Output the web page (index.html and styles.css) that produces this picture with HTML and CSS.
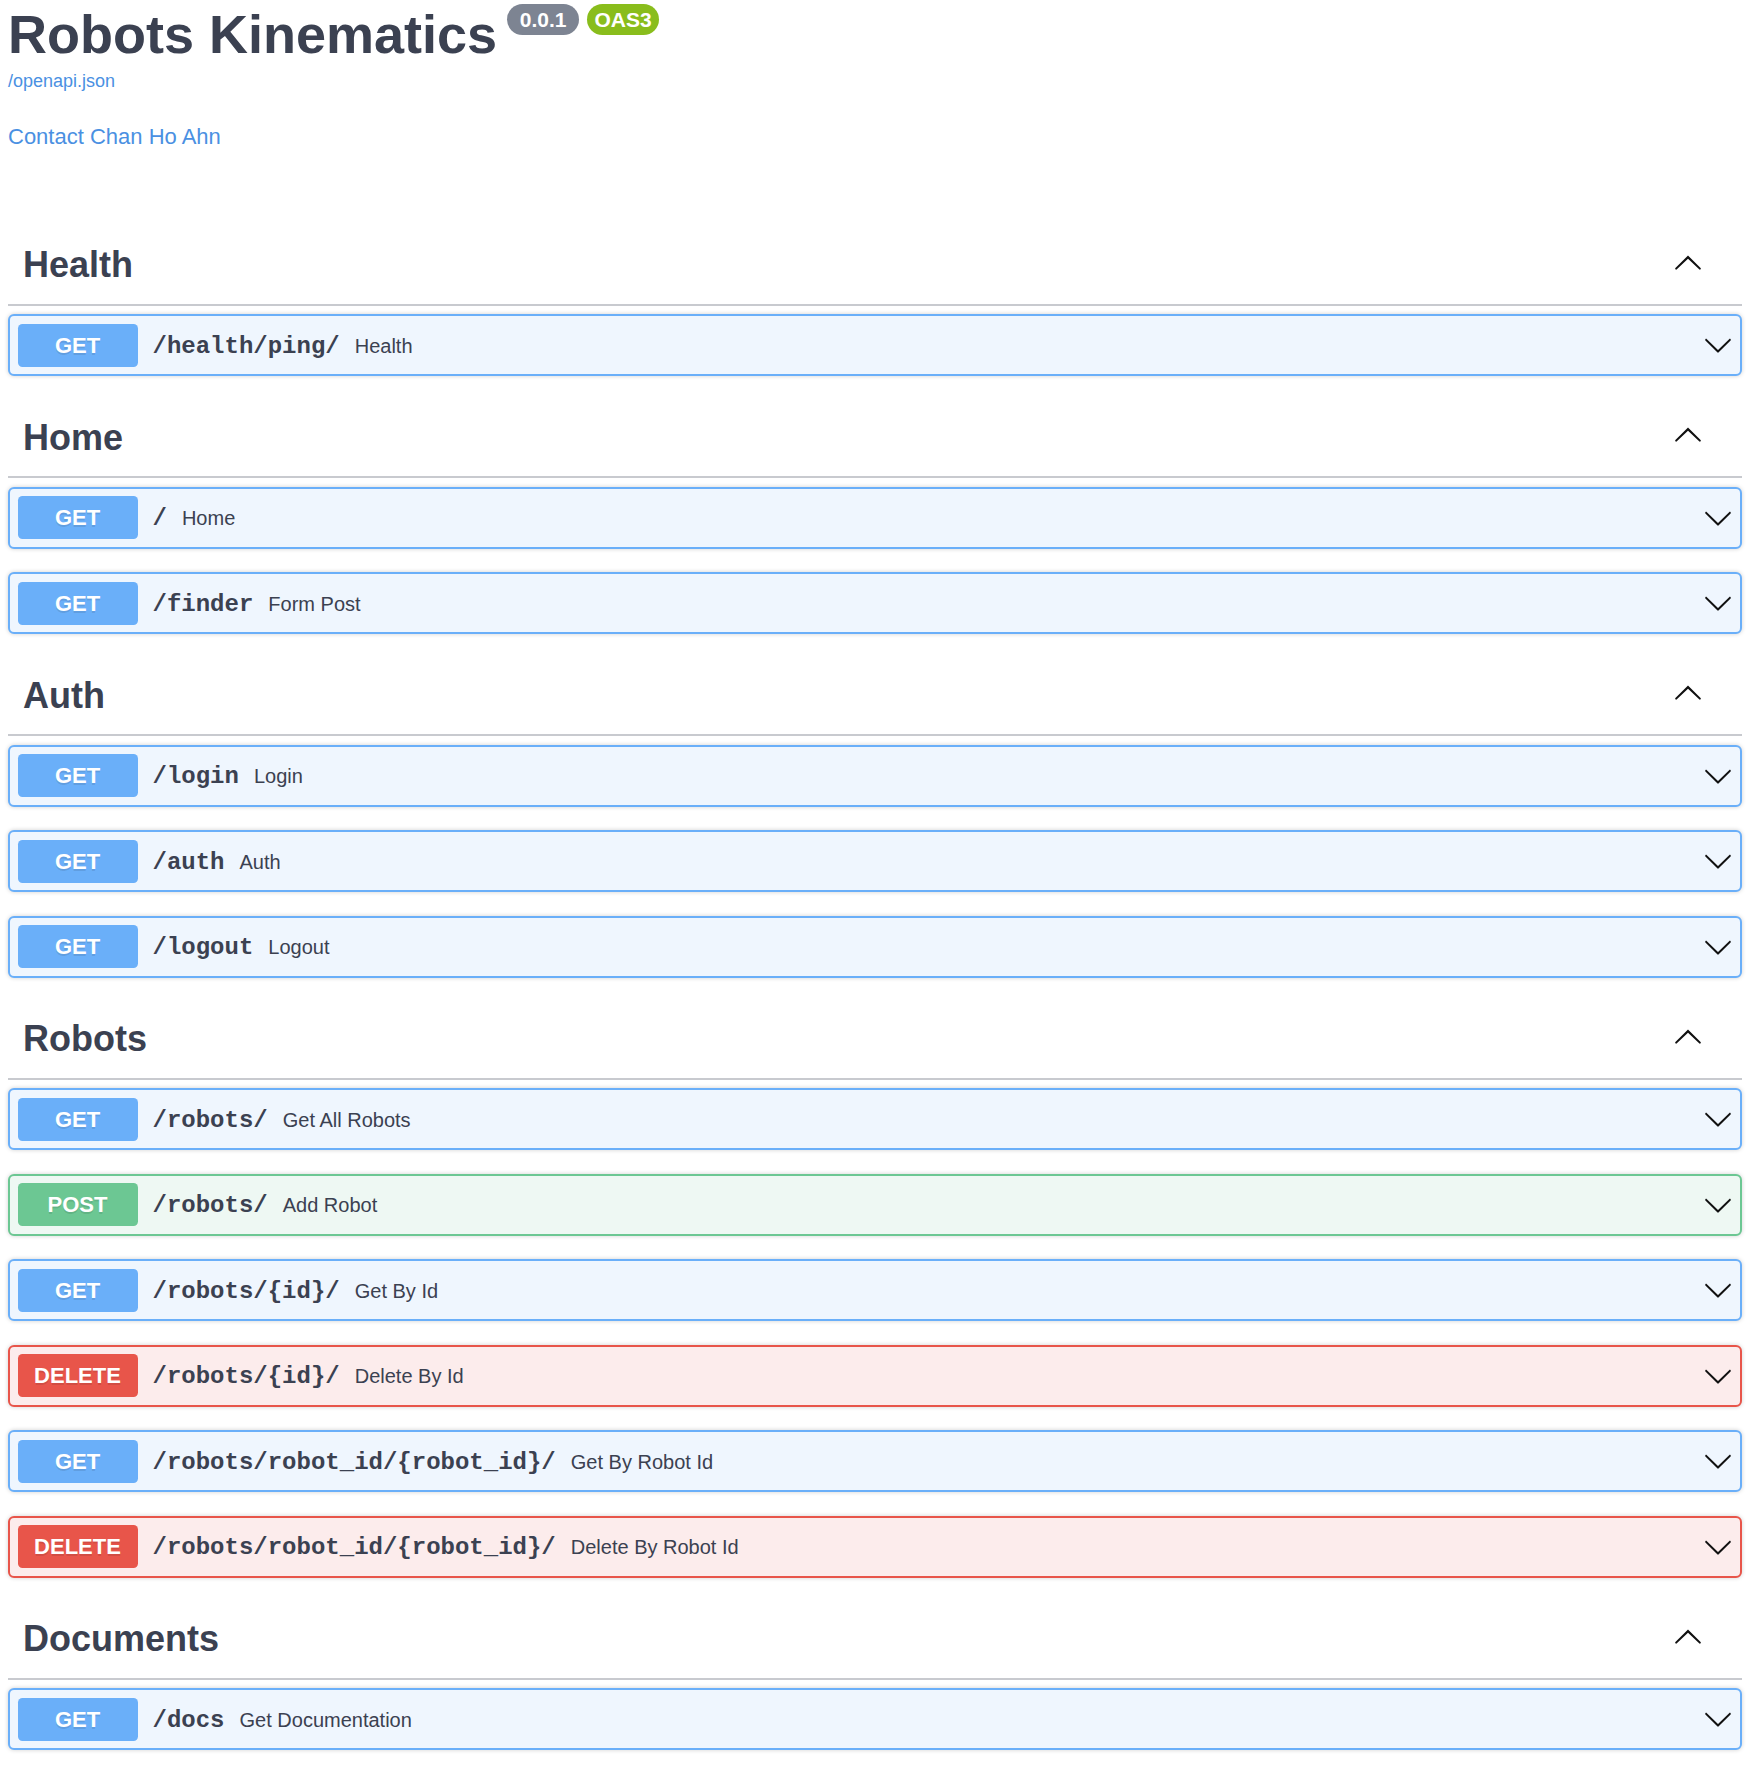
FILE: index.html
```html
<!DOCTYPE html>
<html lang="en">
<head>
<meta charset="utf-8">
<title>Robots Kinematics - Swagger UI</title>
<link rel="stylesheet" href="styles.css">
</head>
<body>
<div class="page">
  <div class="info">
    <div class="title-row">
      <h2 class="title">Robots Kinematics</h2>
      <span class="badge badge-version">0.0.1</span>
      <span class="badge badge-oas">OAS3</span>
    </div>
    <a class="url" href="#">/openapi.json</a>
    <a class="contact" href="#">Contact Chan Ho Ahn</a>
  </div>

  <section class="tag-section">
    <h3 class="tag"><span class="tag-name">Health</span><button class="expand"><svg viewBox="0 0 20 20" class="arrow"><path d="M17.418 14.908C17.69 15.176 18.127 15.176 18.397 14.908C18.667 14.64 18.668 14.207 18.397 13.939L10.489 6.109C10.219 5.841 9.782 5.841 9.51 6.109L1.602 13.939C1.332 14.207 1.332 14.64 1.602 14.908C1.873 15.176 2.311 15.176 2.581 14.908L10 7.767L17.418 14.908Z"/></svg></button></h3>
    <div class="op op-get"><div class="op-summary"><span class="method">GET</span><span class="path">/health/ping/</span><span class="desc">Health</span><svg viewBox="0 0 20 20" class="arrow"><path d="M17.418 6.109c.272-.268.709-.268.979 0s.271.701 0 .969l-7.908 7.83c-.27.268-.707.268-.979 0l-7.908-7.83c-.27-.268-.27-.701 0-.969.271-.268.709-.268.979 0L10 13.25l7.418-7.141z"/></svg></div></div>
  </section>

  <section class="tag-section">
    <h3 class="tag"><span class="tag-name">Home</span><button class="expand"><svg viewBox="0 0 20 20" class="arrow"><path d="M17.418 14.908C17.69 15.176 18.127 15.176 18.397 14.908C18.667 14.64 18.668 14.207 18.397 13.939L10.489 6.109C10.219 5.841 9.782 5.841 9.51 6.109L1.602 13.939C1.332 14.207 1.332 14.64 1.602 14.908C1.873 15.176 2.311 15.176 2.581 14.908L10 7.767L17.418 14.908Z"/></svg></button></h3>
    <div class="op op-get"><div class="op-summary"><span class="method">GET</span><span class="path">/</span><span class="desc">Home</span><svg viewBox="0 0 20 20" class="arrow"><path d="M17.418 6.109c.272-.268.709-.268.979 0s.271.701 0 .969l-7.908 7.83c-.27.268-.707.268-.979 0l-7.908-7.830c-.27-.268-.27-.701 0-.969.271-.268.709-.268.979 0L10 13.25l7.418-7.141z"/></svg></div></div>
    <div class="op op-get"><div class="op-summary"><span class="method">GET</span><span class="path">/finder</span><span class="desc">Form Post</span><svg viewBox="0 0 20 20" class="arrow"><path d="M17.418 6.109c.272-.268.709-.268.979 0s.271.701 0 .969l-7.908 7.83c-.27.268-.707.268-.979 0l-7.908-7.83c-.27-.268-.27-.701 0-.969.271-.268.709-.268.979 0L10 13.25l7.418-7.141z"/></svg></div></div>
  </section>

  <section class="tag-section">
    <h3 class="tag"><span class="tag-name">Auth</span><button class="expand"><svg viewBox="0 0 20 20" class="arrow"><path d="M17.418 14.908C17.69 15.176 18.127 15.176 18.397 14.908C18.667 14.64 18.668 14.207 18.397 13.939L10.489 6.109C10.219 5.841 9.782 5.841 9.51 6.109L1.602 13.939C1.332 14.207 1.332 14.64 1.602 14.908C1.873 15.176 2.311 15.176 2.581 14.908L10 7.767L17.418 14.908Z"/></svg></button></h3>
    <div class="op op-get"><div class="op-summary"><span class="method">GET</span><span class="path">/login</span><span class="desc">Login</span><svg viewBox="0 0 20 20" class="arrow"><path d="M17.418 6.109c.272-.268.709-.268.979 0s.271.701 0 .969l-7.908 7.83c-.27.268-.707.268-.979 0l-7.908-7.83c-.27-.268-.27-.701 0-.969.271-.268.709-.268.979 0L10 13.25l7.418-7.141z"/></svg></div></div>
    <div class="op op-get"><div class="op-summary"><span class="method">GET</span><span class="path">/auth</span><span class="desc">Auth</span><svg viewBox="0 0 20 20" class="arrow"><path d="M17.418 6.109c.272-.268.709-.268.979 0s.271.701 0 .969l-7.908 7.83c-.27.268-.707.268-.979 0l-7.908-7.83c-.27-.268-.27-.701 0-.969.271-.268.709-.268.979 0L10 13.25l7.418-7.141z"/></svg></div></div>
    <div class="op op-get"><div class="op-summary"><span class="method">GET</span><span class="path">/logout</span><span class="desc">Logout</span><svg viewBox="0 0 20 20" class="arrow"><path d="M17.418 6.109c.272-.268.709-.268.979 0s.271.701 0 .969l-7.908 7.83c-.27.268-.707.268-.979 0l-7.908-7.83c-.27-.268-.27-.701 0-.969.271-.268.709-.268.979 0L10 13.25l7.418-7.141z"/></svg></div></div>
  </section>

  <section class="tag-section">
    <h3 class="tag"><span class="tag-name">Robots</span><button class="expand"><svg viewBox="0 0 20 20" class="arrow"><path d="M17.418 14.908C17.69 15.176 18.127 15.176 18.397 14.908C18.667 14.64 18.668 14.207 18.397 13.939L10.489 6.109C10.219 5.841 9.782 5.841 9.51 6.109L1.602 13.939C1.332 14.207 1.332 14.64 1.602 14.908C1.873 15.176 2.311 15.176 2.581 14.908L10 7.767L17.418 14.908Z"/></svg></button></h3>
    <div class="op op-get"><div class="op-summary"><span class="method">GET</span><span class="path">/robots/</span><span class="desc">Get All Robots</span><svg viewBox="0 0 20 20" class="arrow"><path d="M17.418 6.109c.272-.268.709-.268.979 0s.271.701 0 .969l-7.908 7.83c-.27.268-.707.268-.979 0l-7.908-7.83c-.27-.268-.27-.701 0-.969.271-.268.709-.268.979 0L10 13.25l7.418-7.141z"/></svg></div></div>
    <div class="op op-post"><div class="op-summary"><span class="method">POST</span><span class="path">/robots/</span><span class="desc">Add Robot</span><svg viewBox="0 0 20 20" class="arrow"><path d="M17.418 6.109c.272-.268.709-.268.979 0s.271.701 0 .969l-7.908 7.83c-.27.268-.707.268-.979 0l-7.908-7.83c-.27-.268-.27-.701 0-.969.271-.268.709-.268.979 0L10 13.25l7.418-7.141z"/></svg></div></div>
    <div class="op op-get"><div class="op-summary"><span class="method">GET</span><span class="path">/robots/{id}/</span><span class="desc">Get By Id</span><svg viewBox="0 0 20 20" class="arrow"><path d="M17.418 6.109c.272-.268.709-.268.979 0s.271.701 0 .969l-7.908 7.83c-.27.268-.707.268-.979 0l-7.908-7.83c-.27-.268-.27-.701 0-.969.271-.268.709-.268.979 0L10 13.25l7.418-7.141z"/></svg></div></div>
    <div class="op op-delete"><div class="op-summary"><span class="method">DELETE</span><span class="path">/robots/{id}/</span><span class="desc">Delete By Id</span><svg viewBox="0 0 20 20" class="arrow"><path d="M17.418 6.109c.272-.268.709-.268.979 0s.271.701 0 .969l-7.908 7.83c-.27.268-.707.268-.979 0l-7.908-7.83c-.27-.268-.27-.701 0-.969.271-.268.709-.268.979 0L10 13.25l7.418-7.141z"/></svg></div></div>
    <div class="op op-get"><div class="op-summary"><span class="method">GET</span><span class="path">/robots/robot_id/{robot_id}/</span><span class="desc">Get By Robot Id</span><svg viewBox="0 0 20 20" class="arrow"><path d="M17.418 6.109c.272-.268.709-.268.979 0s.271.701 0 .969l-7.908 7.83c-.27.268-.707.268-.979 0l-7.908-7.83c-.27-.268-.27-.701 0-.969.271-.268.709-.268.979 0L10 13.25l7.418-7.141z"/></svg></div></div>
    <div class="op op-delete"><div class="op-summary"><span class="method">DELETE</span><span class="path">/robots/robot_id/{robot_id}/</span><span class="desc">Delete By Robot Id</span><svg viewBox="0 0 20 20" class="arrow"><path d="M17.418 6.109c.272-.268.709-.268.979 0s.271.701 0 .969l-7.908 7.83c-.27.268-.707.268-.979 0l-7.908-7.83c-.27-.268-.27-.701 0-.969.271-.268.709-.268.979 0L10 13.25l7.418-7.141z"/></svg></div></div>
  </section>

  <section class="tag-section">
    <h3 class="tag"><span class="tag-name">Documents</span><button class="expand"><svg viewBox="0 0 20 20" class="arrow"><path d="M17.418 14.908C17.69 15.176 18.127 15.176 18.397 14.908C18.667 14.64 18.668 14.207 18.397 13.939L10.489 6.109C10.219 5.841 9.782 5.841 9.51 6.109L1.602 13.939C1.332 14.207 1.332 14.64 1.602 14.908C1.873 15.176 2.311 15.176 2.581 14.908L10 7.767L17.418 14.908Z"/></svg></button></h3>
    <div class="op op-get"><div class="op-summary"><span class="method">GET</span><span class="path">/docs</span><span class="desc">Get Documentation</span><svg viewBox="0 0 20 20" class="arrow"><path d="M17.418 6.109c.272-.268.709-.268.979 0s.271.701 0 .969l-7.908 7.83c-.27.268-.707.268-.979 0l-7.908-7.83c-.27-.268-.27-.701 0-.969.271-.268.709-.268.979 0L10 13.25l7.418-7.141z"/></svg></div></div>
  </section>
</div>
</body>
</html>
```

FILE: styles.css
```css
* { box-sizing: border-box; }

html, body {
  margin: 0;
  padding: 0;
  background: #ffffff;
}

body {
  font-family: "Liberation Sans", Arial, Helvetica, sans-serif;
  color: #3b4151;
}

.page {
  padding: 3px 20px 0 8px;
}

/* ---------- info ---------- */
.info {
  display: flex;
  flex-direction: column;
  align-items: flex-start;
  margin-bottom: 78px;
}

.title-row {
  display: flex;
  align-items: flex-start;
}

.title {
  margin: 0;
  font-size: 54px;
  line-height: 62px;
  font-weight: 700;
  color: #3b4151;
}

.badge {
  display: inline-block;
  margin-top: 1px;
  min-width: 72px;
  padding: 3px 6px;
  border-radius: 57px;
  font-size: 21px;
  line-height: 25px;
  font-weight: 700;
  color: #ffffff;
  text-align: center;
}

.badge-version {
  margin-left: 10px;
  background: #7d8492;
}

.badge-oas {
  margin-left: 8px;
  background: #89bd1c;
}

.url {
  margin-top: 6px;
  font-size: 18px;
  line-height: 21px;
  color: #4a90e2;
  text-decoration: none;
}

.contact {
  margin-top: 33px;
  font-size: 22px;
  line-height: 24px;
  color: #4a90e2;
  text-decoration: none;
}

/* ---------- tag sections ---------- */
.tag-section {
  display: flex;
  flex-direction: column;
}

.tag {
  display: flex;
  align-items: center;
  margin: 0 0 8.5px 0;
  padding: 15px 30px 15px 15px;
  border-bottom: 2px solid #c8cacf;
  font-size: 36px;
  font-weight: 700;
  color: #3b4151;
}

.tag-name {
  flex: 1 1 auto;
  line-height: 46.5px;
}

.expand {
  display: flex;
  align-items: center;
  margin: 0 0 7.5px 0;
  padding: 0 9px;
  border: none;
  background: none;
}

.arrow {
  width: 30px;
  height: 30px;
  flex: 0 0 30px;
  fill: #111111;
}

/* ---------- operations ---------- */
.op {
  margin: 0 0 23.5px 0;
  border: 2px solid #6aaff9;
  border-radius: 6px;
  background: #eff6fe;
  box-shadow: 0 0 4.5px rgba(0, 0, 0, 0.19);
}

.op-summary {
  display: flex;
  align-items: baseline;
  padding: 7.5px;
}

.op-summary .arrow {
  align-self: center;
}

.method {
  min-width: 120px;
  padding: 9px 0;
  border-radius: 4.5px;
  background: #6aaff9;
  color: #ffffff;
  font-size: 22px;
  line-height: 25px;
  font-weight: 700;
  text-align: center;
  text-shadow: 0 1.5px 0 rgba(0, 0, 0, 0.1);
}

.path {
  padding: 0 15px;
  font-family: "Courier New", "Liberation Mono", monospace;
  font-size: 24px;
  font-weight: 700;
  color: #3b4151;
}

.desc {
  flex: 1 1 auto;
  font-size: 20px;
  color: #3b4151;
}

.op-post {
  border-color: #6cc793;
  background: #eef8f3;
}

.op-post .method {
  background: #6cc793;
}

.op-delete {
  border-color: #e8554a;
  background: #fcecec;
}

.op-delete .method {
  background: #e8554a;
}
```
